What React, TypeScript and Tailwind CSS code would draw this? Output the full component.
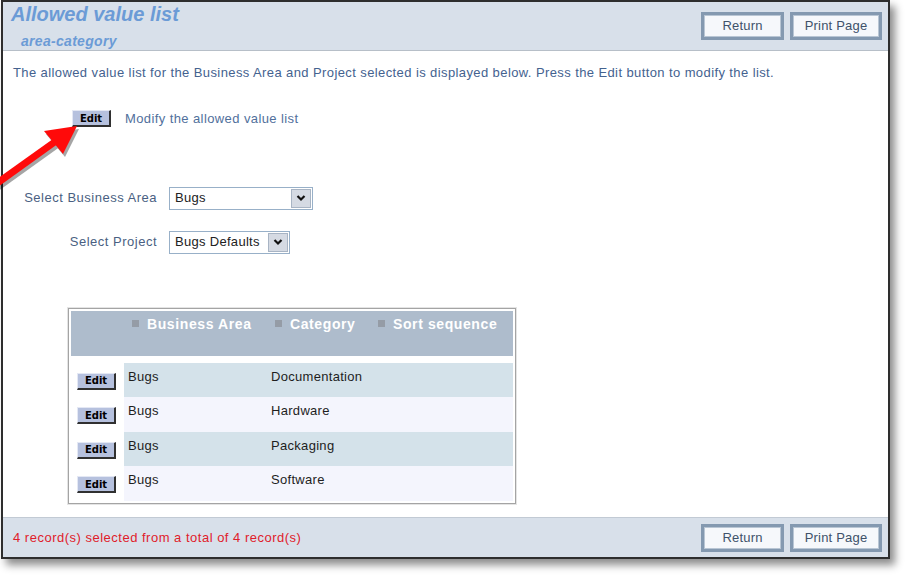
import React from 'react';

const rows = [
  { area: 'Bugs', category: 'Documentation', seq: '' },
  { area: 'Bugs', category: 'Hardware', seq: '' },
  { area: 'Bugs', category: 'Packaging', seq: '' },
  { area: 'Bugs', category: 'Software', seq: '' },
];

const PageButton: React.FC<{ label: string; width: string }> = ({ label, width }) => (
  <button
    className={`${width} h-[28px] border-[3px] border-[#8499b0] bg-[#f6f8fb] p-0 text-[13px] tracking-[0.2px] text-[#40526a] outline outline-1 -outline-offset-[4px] outline-[#b9c6d4]`}
  >
    {label}
  </button>
);

const EditButton: React.FC<{ className?: string }> = ({ className = '' }) => (
  <button
    className={`block h-[17px] w-[39px] border border-t-[#e4e8f4] border-l-[#e4e8f4] border-r-[#303030] border-b-[#303030] border-r-2 border-b-2 bg-[#b6c1de] p-0 text-[10px] font-bold leading-[13px] text-black [font-family:'DejaVu_Sans',sans-serif] ${className}`}
  >
    Edit
  </button>
);

const FakeSelect: React.FC<{ value: string; width: string }> = ({ value, width }) => (
  <div className={`${width} flex h-[23px] border border-[#98b0c8] bg-white`}>
    <div className="flex-1 truncate pl-[5px] text-[13px] leading-[19px] tracking-[0.3px] text-[#222]">{value}</div>
    <div className="m-[1px] flex w-[20px] items-center justify-center border border-[#a8b4c4] bg-[#d5dae3]">
      <svg width="10" height="8" viewBox="0 0 10 8">
        <path d="M1.5 2 L5 5.5 L8.5 2" fill="none" stroke="#111" strokeWidth="2.2" />
      </svg>
    </div>
  </div>
);

const HeaderCell: React.FC<{ label: string; width: string }> = ({ label, width }) => (
  <div className={`${width} flex items-center gap-[8px] self-start pl-[8px] pt-[5px]`}>
    <span className="h-[7px] w-[7px] bg-[#959ca6]" />
    <span className="text-[14px] font-bold leading-[16px] tracking-[0.6px] text-white">{label}</span>
  </div>
);

export default function App() {
  return (
    <div className="relative h-[575px] w-[906px] bg-white [font-family:'Liberation_Sans',Arial,sans-serif]">
      <div className="ml-[1px] flex h-[559px] w-[889px] flex-col border-2 border-[#2e2e2e] bg-white shadow-[5px_6px_8px_rgba(0,0,0,0.45)]">
        {/* title bar */}
        <div className="flex h-[49px] border-b border-[#b7bfc8] bg-[#d8e0ea]">
          <div className="flex-1 pl-[8px]">
            <div className="text-[20px] font-bold italic leading-[24px] text-[#6b9bd6]">Allowed value list</div>
            <div className="mt-[7px] pl-[10px] text-[14px] font-bold italic leading-[16px] tracking-[0.3px] text-[#6b9bd6]">
              area-category
            </div>
          </div>
          <div className="flex gap-[6px] pr-[6px] pt-[10px]">
            <PageButton label="Return" width="w-[83px]" />
            <PageButton label="Print Page" width="w-[92px]" />
          </div>
        </div>

        {/* content */}
        <div className="flex-1 pl-[10px]">
          <p className="pt-[14px] text-[13px] leading-[16px] tracking-[0.4px] text-[#44628f]">
            The allowed value list for the Business Area and Project selected is displayed below. Press the Edit button to modify the list.
          </p>

          <div className="ml-[59px] mt-[28px] flex items-center gap-[14px]">
            <EditButton />
            <span className="text-[13px] tracking-[0.4px] text-[#51709c]">Modify the allowed value list</span>
          </div>

          <div className="-ml-[10px] mt-[58px] grid grid-cols-[154px_auto] items-center justify-start gap-x-[12px] gap-y-[21px]">
            <span className="text-right text-[13px] tracking-[0.5px] text-[#4a5f82]">Select Business Area</span>
            <FakeSelect value="Bugs" width="w-[144px]" />
            <span className="text-right text-[13px] tracking-[0.5px] text-[#4a5f82]">Select Project</span>
            <FakeSelect value="Bugs Defaults" width="w-[121px]" />
          </div>

          <div className="ml-[55px] mt-[54px] w-[448px] border border-[#a4a4a4] p-[2px] shadow-[0_0_0_1px_#e4e4e4]">
            <div className="flex h-[45px] bg-[#aebccc]">
              <div className="w-[53px]" />
              <HeaderCell label="Business Area" width="w-[143px]" />
              <HeaderCell label="Category" width="w-[103px]" />
              <HeaderCell label="Sort sequence" width="w-[143px]" />
            </div>
            <div className="mt-[7px]">
              {rows.map((r, i) => (
                <div key={i} className="flex h-[34.5px]">
                  <div className="w-[53px] pl-[6px] pt-[10px]">
                    <EditButton />
                  </div>
                  <div
                    className={`flex flex-1 pt-[6px] text-[13px] leading-[15px] tracking-[0.3px] text-[#1e1e1e] ${
                      i % 2 === 0 ? 'bg-[#d4e2ea]' : 'bg-[#f4f5fd]'
                    }`}
                  >
                    <span className="w-[143px] pl-[4px]">{r.area}</span>
                    <span className="w-[103px] pl-[4px]">{r.category}</span>
                    <span className="flex-1 pl-[4px]">{r.seq}</span>
                  </div>
                </div>
              ))}
            </div>
          </div>
        </div>

        {/* footer */}
        <div className="flex h-[40px] items-center border-t border-[#c2cad4] bg-[#d8e0ea]">
          <span className="flex-1 pl-[10px] text-[13px] tracking-[0.5px] text-[#e0202a]">
            4 record(s) selected from a total of 4 record(s)
          </span>
          <div className="flex gap-[6px] pr-[6px]">
            <PageButton label="Return" width="w-[83px]" />
            <PageButton label="Print Page" width="w-[92px]" />
          </div>
        </div>
      </div>

      {/* red pointer arrow */}
      <svg className="pointer-events-none absolute left-0 top-0" width="100" height="200" viewBox="0 0 100 200">
        <g transform="translate(2,3)" opacity="0.35">
          <line x1="-4" y1="184" x2="56" y2="141" stroke="#000" strokeWidth="7" />
          <polygon points="44,131 77,126 63,154" fill="#000" />
        </g>
        <line x1="-4" y1="184" x2="56" y2="141" stroke="#ff0a0a" strokeWidth="7" />
        <polygon points="44,131 77,126 63,154" fill="#ff0a0a" />
      </svg>
    </div>
  );
}
